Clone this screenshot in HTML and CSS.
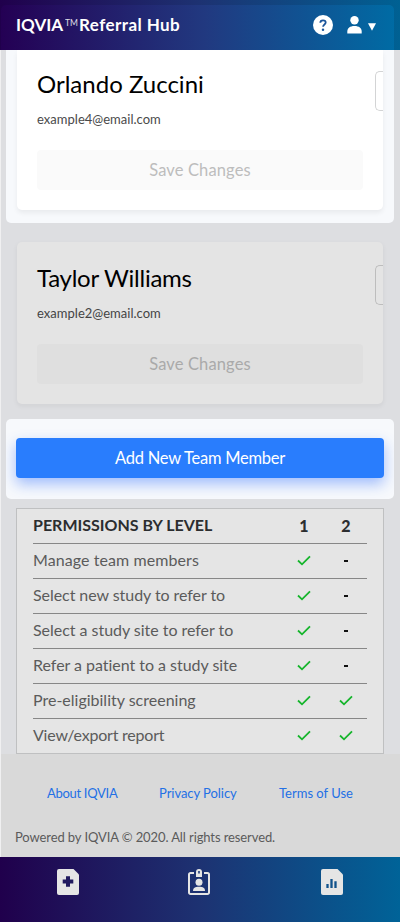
FILE: index.html
```html
<!DOCTYPE html>
<html lang="en">
<head>
<meta charset="utf-8">
<title>IQVIA Referral Hub</title>
<link rel="stylesheet" href="styles.css">
</head>
<body>
<div class="app">
  <header class="topbar">
    <div class="topbar-inner">
      <h1 class="brand"><span class="brand-name">IQVIA</span><span class="tm">TM</span><span class="brand-product">Referral Hub</span></h1>
      <svg class="help" width="20" height="20" viewBox="0 0 20 20"><circle cx="10" cy="10" r="10" fill="#fff"/><path d="M7.300 7.800C7.300 6.300 8.400 5.300 10 5.300s2.700.9 2.700 2.300c0 1.800-2.600 2-2.600 4.100" fill="none" stroke="#1b559b" stroke-width="1.800"/><circle cx="10" cy="14.700" r="1.250" fill="#1b559b"/></svg>
      <svg class="user" width="15" height="18" viewBox="0 0 15 18" fill="#fff"><circle cx="7.500" cy="4.300" r="4.200"/><path d="M.3 17.600V15.500C.3 12.200 3 10 7.500 10s7.200 2.200 7.200 5.500v2.100z"/></svg>
      <svg class="caret" width="8" height="8" viewBox="0 0 8 8"><path d="M0 .3h8L4 7.700z" fill="#fff"/></svg>
    </div>
  </header>
  <main>
    <section class="spotlight">
      <article class="card">
        <div class="card-head"><h2 class="n1">Orlando Zuccini</h2><span class="level"></span></div>
        <p class="email">example4@email.com</p>
        <button class="save">Save Changes</button>
      </article>
    </section>
    <article class="card dim">
      <div class="card-head"><h2 class="n2">Taylor Williams</h2><span class="level"></span></div>
      <p class="email">example2@email.com</p>
      <button class="save">Save Changes</button>
    </article>
    <section class="add-panel"><button class="add">Add New Team Member</button></section>
    <section class="permissions">
      <div class="row head"><span>PERMISSIONS BY LEVEL</span><b>1</b><b>2</b></div>
      <div class="row"><span class="p1">Manage team members</span><i><svg class="check" viewBox="0 0 14 11"><path d="M1 5.500 5 9.300 13 1.300"/></svg></i><i><em></em></i></div>
      <div class="row"><span class="p2">Select new study to refer to</span><i><svg class="check" viewBox="0 0 14 11"><path d="M1 5.500 5 9.300 13 1.300"/></svg></i><i><em></em></i></div>
      <div class="row"><span class="p3">Select a study site to refer to</span><i><svg class="check" viewBox="0 0 14 11"><path d="M1 5.500 5 9.300 13 1.300"/></svg></i><i><em></em></i></div>
      <div class="row"><span class="p4">Refer a patient to a study site</span><i><svg class="check" viewBox="0 0 14 11"><path d="M1 5.500 5 9.300 13 1.300"/></svg></i><i><em></em></i></div>
      <div class="row"><span class="p5">Pre-eligibility screening</span><i><svg class="check" viewBox="0 0 14 11"><path d="M1 5.500 5 9.300 13 1.300"/></svg></i><i><svg class="check" viewBox="0 0 14 11"><path d="M1 5.500 5 9.300 13 1.300"/></svg></i></div>
      <div class="row"><span class="p6">View/export report</span><i><svg class="check" viewBox="0 0 14 11"><path d="M1 5.500 5 9.300 13 1.300"/></svg></i><i><svg class="check" viewBox="0 0 14 11"><path d="M1 5.500 5 9.300 13 1.300"/></svg></i></div>
    </section>
  </main>
  <footer>
    <nav class="links"><a class="l1">About IQVIA</a><a class="l2">Privacy Policy</a><a class="l3">Terms of Use</a></nav>
    <p class="legal">Powered by IQVIA © 2020. All rights reserved.</p>
  </footer>
  <nav class="tabbar">
    <svg width="22" height="26" viewBox="0 0 22 26"><path d="M2 0h14.500L22 5.500V24a2 2 0 0 1-2 2H2a2 2 0 0 1-2-2V2a2 2 0 0 1 2-2z" fill="#e5e5e5"/><path d="M11 7.200v10.600M5.700 12.500h10.600" stroke="#211a5f" stroke-width="4"/></svg>
    <svg class="badge" width="22" height="26" viewBox="0 0 22 26"><path d="M6 4H2.500A1.500 1.500 0 0 0 1 5.500v18A1.500 1.500 0 0 0 2.500 25h17a1.500 1.500 0 0 0 1.500-1.500v-18A1.500 1.500 0 0 0 19.500 4H16" fill="none" stroke="#e5e5e5" stroke-width="2"/><path d="M8 8V3a3 3 0 0 1 6 0v5z" fill="#e5e5e5"/><path d="M11 2v2.500" stroke="#1d397b" stroke-width="1.600"/><circle cx="11" cy="13.300" r="3.500" fill="#e5e5e5"/><path d="M5 22c0-3 2-4.200 6-4.200s6 1.200 6 4.200z" fill="#e5e5e5"/></svg>
    <svg width="22" height="26" viewBox="0 0 22 26"><path d="M2 0h14.500L22 5.500V24a2 2 0 0 1-2 2H2a2 2 0 0 1-2-2V2a2 2 0 0 1 2-2z" fill="#e5e5e5"/><path d="M6.500 15v4M10.500 10v9M14.500 12.300V19" stroke="#10528b" stroke-width="2.300"/></svg>
  </nav>
</div>
</body>
</html>
```

FILE: styles.css
```css
* { box-sizing: border-box; }
body { margin: 0; font-family: Lato, "Liberation Sans", sans-serif; font-variant-ligatures: none; }
h1, h2, p { margin: 0; font-weight: 400; }
button { display: block; border: 0; padding: 0; font-family: inherit; }
span, a, h2, p, button { white-space: nowrap; }
.app { width: 400px; height: 922px; display: flex; flex-direction: column; overflow: hidden; background: #dddee1; }
.topbar { height: 50px; flex: none; padding: 5px 6px 0 1px; background: linear-gradient(90deg, #20004c 0%, #1d3272 50%, #006193 100%); }
.topbar-inner { height: 45px; border-radius: 5px 5px 0 0; padding: 0 18px 5px 15px; display: flex; align-items: center; color: #fff; background: linear-gradient(90deg, #240054 0%, #213980 52%, #006ba4 100%); }
.brand { display: flex; align-items: center; flex: 1; font-size: 17px; line-height: 20px; font-weight: 700; }
.brand-name { width: 49px; }
.brand-product { letter-spacing: .43px; }
.tm { font-size: 8.500px; font-weight: 400; width: 14px; line-height: 12px; padding-bottom: 5px; opacity: .85; }
.help { margin-right: 14px; }
.user { margin-right: 6px; }
.caret { margin-top: 3px; }
main { height: 704px; flex: none; border-left: 1px solid #f0f0f1; padding: 0 6px 0 5px; }
.spotlight { height: 173px; border-radius: 0 0 5px 5px; background: #f7f9fc; padding: 0 10px; overflow: hidden; }
.card { height: 160px; margin: 0 1px; background: #fff; border-radius: 0 0 5px 5px; padding: 21px 0 0 20px; box-shadow: 0 3px 5px rgba(0,0,0,.06); overflow: hidden; }
.card-head { display: flex; justify-content: space-between; height: 40px; }
h2 { font-size: 24px; line-height: 25px; color: #000; }
.n2 { letter-spacing: -.25px; }
.level { width: 8px; height: 40px; border: 1px solid #d3d4d5; border-right: 0; border-radius: 5px 0 0 5px; }
.email { font-size: 13px; line-height: 16px; color: #4a4a4a; height: 39px; letter-spacing: .02px; }
.save { margin-right: 20px; width: 326px; height: 40px; border-radius: 4px; background: #fafafa; color: #bdbdbd; font-size: 16.500px; letter-spacing: .12px; }
.dim { margin: 19px 11px 0; height: 162px; border-radius: 5px; background: #e4e4e4; padding-top: 23px; box-shadow: 0 2px 4px 1px rgba(0,0,0,.045); }
.dim .level { border-color: #bdbdbd; }
.dim .save { background: #dfdfdf; color: #aaa; }
.dim .email { color: #444; }
.add-panel { height: 80px; margin-top: 15px; border-radius: 5px; padding: 19px 10px 0; background: #f7f9fc; overflow: hidden; }
.add { width: 368px; height: 40px; border-radius: 4px; color: #fff; background: #297dfd; font-size: 16.500px; letter-spacing: -.26px; box-shadow: 0 6px 14px rgba(41,105,253,.42); }
.permissions { margin: 9px 10px 0; height: 246px; border: 1px solid #bfc0c1; background: #e5e5e5; padding: 0 16px; }
.row { height: 35px; display: grid; grid-template-columns: 1fr 42px 42px; align-items: center; border-bottom: 1px solid #878787; padding-bottom: 2px; color: #5b5b5b; font-size: 16px; }
.row:last-child { border-bottom: 0; padding-bottom: 3px; }
.row > span { padding-bottom: 1px; }
.row b, .row i { display: flex; justify-content: center; }
.head { color: #2b2d2f; font-weight: 700; }
.p1 { letter-spacing: .08px; }
.p2 { letter-spacing: -.06px; }
.p3, .p4 { letter-spacing: -.03px; }
.p6 { letter-spacing: -.22px; }
.check { width: 14px; height: 11px; fill: none; stroke: #16b52c; stroke-width: 1.800; }
.row em { width: 4px; height: 2px; margin-top: 1px; background: #111; }
footer { height: 103px; flex: none; border-left: 1px solid #f0f0f1; background: #d9d9d9; padding: 30px 14px 0; font-size: 13px; line-height: 18px; }
.links { display: flex; color: #2370e5; padding-left: 32px; }
.l1 { width: 112px; letter-spacing: -.3px; }
.l2 { width: 120px; letter-spacing: -.05px; }
.legal { margin-top: 26px; color: #5b5b5b; letter-spacing: -.1px; }
.tabbar { flex: 1; display: flex; justify-content: space-between; padding: 12px 57px 0; background: linear-gradient(90deg, #20004c 0%, #1d3272 50%, #006398 100%); }
.badge { margin-right: 2px; }
```
